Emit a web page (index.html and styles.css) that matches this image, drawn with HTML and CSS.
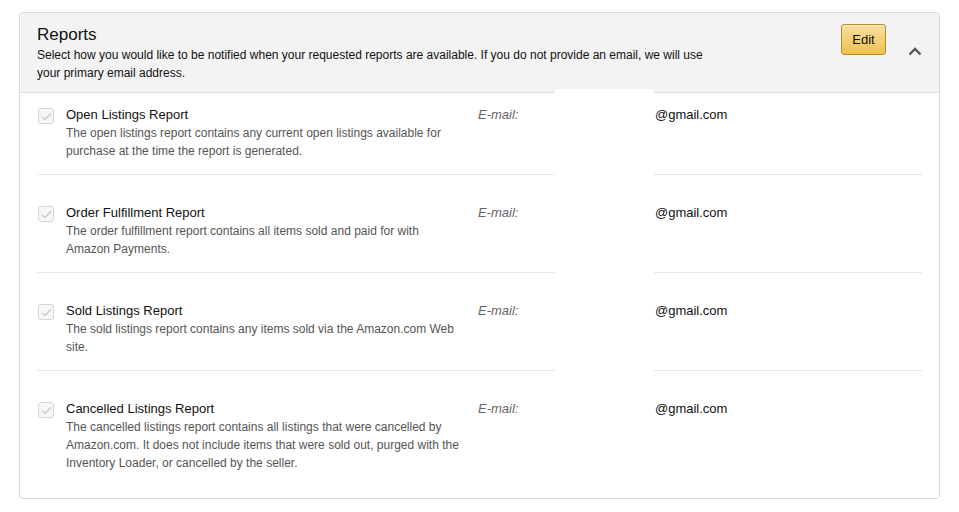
FILE: index.html
```html
<!DOCTYPE html>
<html lang="en">
<head>
<meta charset="utf-8">
<title>Reports</title>
<link rel="stylesheet" href="styles.css">
</head>
<body>
<section class="card">
  <header class="card-head">
    <div class="head-text">
      <h2 class="title">Reports</h2>
      <p class="subtitle">Select how you would like to be notified when your requested reports are available. If you do not provide an email, we will use your primary email address.</p>
    </div>
    <div class="head-actions">
      <button class="btn-edit" type="button">Edit</button>
      <span class="chevron">
        <svg width="14" height="9" viewBox="0 0 14 9"><path d="M1.5 7.5 L7 2 L12.5 7.5" fill="none" stroke="#555" stroke-width="2.4"/></svg>
      </span>
    </div>
  </header>
  <div class="card-body">
    <div class="row">
      <span class="check"><svg width="11" height="9" viewBox="0 0 11 9"><path d="M1 5 L4 7.5 L10 1.5" fill="none" stroke="#c4c4c4" stroke-width="1.2"/></svg></span>
      <div class="info">
        <div class="name">Open Listings Report</div>
        <div class="desc">The open listings report contains any current open listings available for purchase at the time the report is generated.</div>
      </div>
      <div class="label">E-mail:</div>
      <div class="value">@gmail.com</div>
    </div>
    <div class="row">
      <span class="check"><svg width="11" height="9" viewBox="0 0 11 9"><path d="M1 5 L4 7.5 L10 1.5" fill="none" stroke="#c4c4c4" stroke-width="1.2"/></svg></span>
      <div class="info">
        <div class="name">Order Fulfillment Report</div>
        <div class="desc">The order fulfillment report contains all items sold and paid for with Amazon Payments.</div>
      </div>
      <div class="label">E-mail:</div>
      <div class="value">@gmail.com</div>
    </div>
    <div class="row">
      <span class="check"><svg width="11" height="9" viewBox="0 0 11 9"><path d="M1 5 L4 7.5 L10 1.5" fill="none" stroke="#c4c4c4" stroke-width="1.2"/></svg></span>
      <div class="info">
        <div class="name">Sold Listings Report</div>
        <div class="desc">The sold listings report contains any items sold via the Amazon.com Web site.</div>
      </div>
      <div class="label">E-mail:</div>
      <div class="value">@gmail.com</div>
    </div>
    <div class="row">
      <span class="check"><svg width="11" height="9" viewBox="0 0 11 9"><path d="M1 5 L4 7.5 L10 1.5" fill="none" stroke="#c4c4c4" stroke-width="1.2"/></svg></span>
      <div class="info">
        <div class="name">Cancelled Listings Report</div>
        <div class="desc">The cancelled listings report contains all listings that were cancelled by Amazon.com. It does not include items that were sold out, purged with the Inventory Loader, or cancelled by the seller.</div>
      </div>
      <div class="label">E-mail:</div>
      <div class="value">@gmail.com</div>
    </div>
  </div>
  <div class="redact"></div>
</section>
</body>
</html>
```

FILE: styles.css
```css
* { box-sizing: border-box; }

body {
  margin: 12px 19px;
  background: #fff;
  font-family: "Liberation Sans", Arial, Helvetica, sans-serif;
  color: #111;
}

.card {
  position: relative;
  border: 1px solid #dadada;
  border-radius: 4px;
  overflow: hidden;
  height: 487px;
}

.card-head {
  display: flex;
  justify-content: space-between;
  align-items: flex-start;
  background: #f3f3f3;
  border-bottom: 1px solid #dddddd;
  padding: 11px 17px 10px 17px;
  height: 80px;
}

.head-text {
  width: 680px;
}

.title {
  margin: 0;
  font-size: 17px;
  font-weight: normal;
  line-height: 22px;
  color: #111;
}

.subtitle {
  margin: 0;
  font-size: 12px;
  line-height: 18px;
  color: #111;
}

.head-actions {
  display: flex;
  align-items: flex-start;
}

.btn-edit {
  width: 45px;
  height: 31px;
  border: 1px solid #b68f2b;
  border-radius: 3px;
  background: linear-gradient(to bottom, #f7dfa5, #f0c14b);
  font-family: "Liberation Sans", Arial, sans-serif;
  font-size: 13px;
  color: #111;
  padding: 0;
  box-shadow: inset 0 1px 0 rgba(255,255,255,0.4);
}

.chevron {
  display: block;
  margin: 23px 0 0 22px;
  width: 14px;
  height: 9px;
}

.chevron svg { display: block; }

.card-body {
  padding: 0 17px;
}

.row {
  display: flex;
  align-items: flex-start;
  padding: 29px 0 14px 0;
  border-bottom: 1px solid #e7e7e7;
}

.row:first-child { padding-top: 13px; }
.row:last-child { border-bottom: none; }

.check {
  flex: none;
  display: flex;
  align-items: center;
  justify-content: center;
  width: 16px;
  height: 16px;
  margin: 2px 12px 0 1px;
  border: 1px solid #d6d6d6;
  border-radius: 3px;
  background: #f7f7f7;
}

.check svg { display: block; }

.info {
  flex: none;
  width: 396px;
}

.name {
  font-size: 13px;
  line-height: 18px;
  color: #111;
}

.desc {
  font-size: 12px;
  line-height: 18px;
  color: #555;
}

.label {
  flex: none;
  width: 77px;
  margin-left: 16px;
  font-size: 13px;
  line-height: 18px;
  font-style: italic;
  color: #666;
}

.value {
  flex: none;
  padding-left: 100px;
  font-size: 13px;
  line-height: 18px;
  color: #111;
}

.redact {
  position: absolute;
  left: 535px;
  top: 76px;
  width: 99px;
  height: 300px;
  background: #fff;
}
```
